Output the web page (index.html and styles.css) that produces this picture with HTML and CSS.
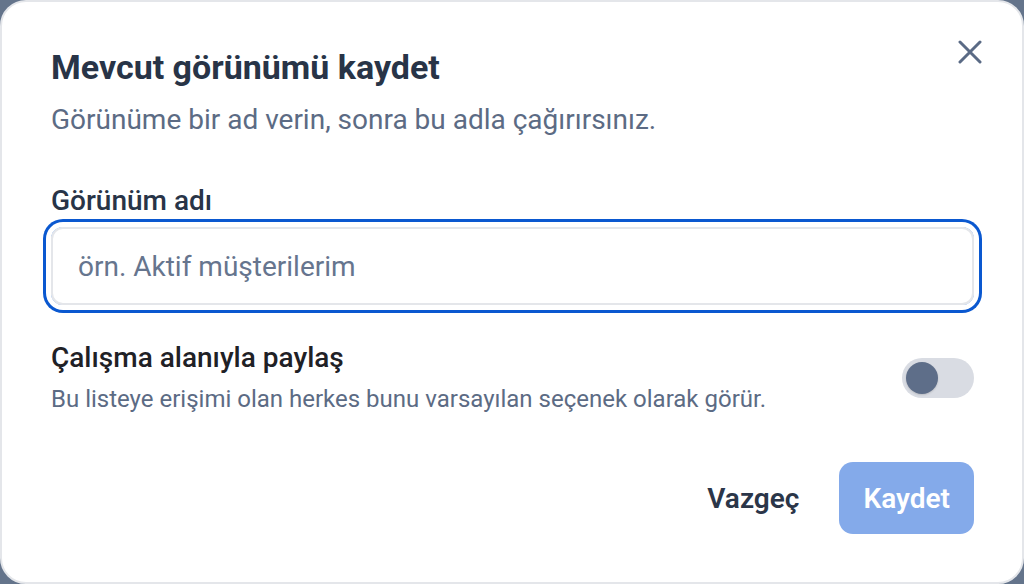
FILE: index.html
```html
<!DOCTYPE html>
<html lang="tr">
<head>
<meta charset="utf-8">
<title>Mevcut görünümü kaydet</title>
<link rel="stylesheet" href="styles.css">
</head>
<body>
<div class="dialog" role="dialog" aria-labelledby="dlg-title">
  <button class="close" aria-label="Kapat">
    <svg width="24" height="24" viewBox="0 0 24 24" fill="none" stroke="currentColor" stroke-width="3" stroke-linecap="round"><path d="M2 2L22 22M22 2L2 22"/></svg>
  </button>
  <header class="head">
    <h1 id="dlg-title" class="title">Mevcut görünümü kaydet</h1>
    <p class="subtitle">Görünüme bir ad verin, sonra bu adla çağırırsınız.</p>
  </header>
  <div class="field">
    <label class="label" for="view-name">Görünüm adı</label>
    <div class="input-ring">
      <input id="view-name" class="input" type="text" placeholder="örn. Aktif müşterilerim">
    </div>
  </div>
  <div class="share">
    <div class="share-text">
      <div class="share-title">Çalışma alanıyla paylaş</div>
      <div class="share-desc">Bu listeye erişimi olan herkes bunu varsayılan seçenek olarak görür.</div>
    </div>
    <div class="toggle"><span class="knob"></span></div>
  </div>
  <footer class="actions">
    <button class="btn-ghost">Vazgeç</button>
    <button class="btn-primary">Kaydet</button>
  </footer>
</div>
</body>
</html>
```
FILE: styles.css
```css
* { box-sizing: border-box; }
html, body { margin: 0; padding: 0; }
body {
  width: 1024px;
  height: 584px;
  background: #64748b;
  font-family: Roboto, "Noto Sans", sans-serif;
  overflow: hidden;
}
.dialog {
  position: relative;
  width: 1024px;
  height: 584px;
  background: #ffffff;
  border: 2px solid #e4e6ea;
  border-radius: 26px;
  padding: 45px 48px 0 49px;
  display: flex;
  flex-direction: column;
}
.close {
  position: absolute;
  top: 30px;
  right: 32px;
  width: 40px;
  height: 40px;
  border: 0;
  background: transparent;
  color: #5a6a85;
  display: flex;
  align-items: center;
  justify-content: center;
  padding: 0;
}
.head { display: flex; flex-direction: column; }
.title {
  margin: 0;
  font-size: 34px;
  line-height: 40px;
  font-weight: 700;
  color: #283447;
}
.subtitle {
  margin: 15px 0 0;
  font-size: 28px;
  line-height: 36px;
  color: #5c6b84;
}
.field {
  margin-top: 45px;
  display: flex;
  flex-direction: column;
}
.label {
  font-size: 28px;
  line-height: 36px;
  font-weight: 500;
  color: #283447;
}
.input-ring {
  margin-top: 8px;
  border-radius: 12px;
  box-shadow: 0 0 0 5px #ffffff, 0 0 0 8px #0a58d0;
}
.input {
  display: block;
  width: 100%;
  height: 78px;
  border: 2px solid #e4e6ea;
  border-radius: 12px;
  padding: 0 25px;
  font-family: inherit;
  font-size: 28px;
  color: #283447;
  background: #fff;
  outline: none;
}
.input::placeholder { color: #66758e; }
.share {
  margin-top: 35px;
  display: flex;
  align-items: center;
  justify-content: space-between;
}
.share-text { display: flex; flex-direction: column; gap: 7px; }
.share-title {
  font-size: 28px;
  line-height: 36px;
  font-weight: 500;
  color: #1f2126;
}
.share-desc {
  font-size: 24px;
  line-height: 32px;
  color: #5c6b84;
}
.toggle {
  width: 72px;
  height: 40px;
  border-radius: 20px;
  background: #d9dce3;
  padding: 4px;
  display: flex;
  align-items: center;
  flex-shrink: 0;
}
.knob {
  width: 32px;
  height: 32px;
  border-radius: 50%;
  background: #5e6e89;
  box-shadow: 0 1px 2px rgba(0,0,0,0.15);
}
.actions {
  margin-top: 47px;
  display: flex;
  justify-content: flex-end;
  align-items: center;
  gap: 20px;
}
.btn-ghost {
  height: 72px;
  padding: 0 20px;
  border: 0;
  background: transparent;
  font-family: inherit;
  font-size: 28px;
  font-weight: 600;
  color: #2b3649;
}
.btn-primary {
  height: 72px;
  padding: 0 24px;
  border: 0;
  border-radius: 14px;
  background: #84aaea;
  font-family: inherit;
  font-size: 28px;
  font-weight: 600;
  color: #ffffff;
}
```
